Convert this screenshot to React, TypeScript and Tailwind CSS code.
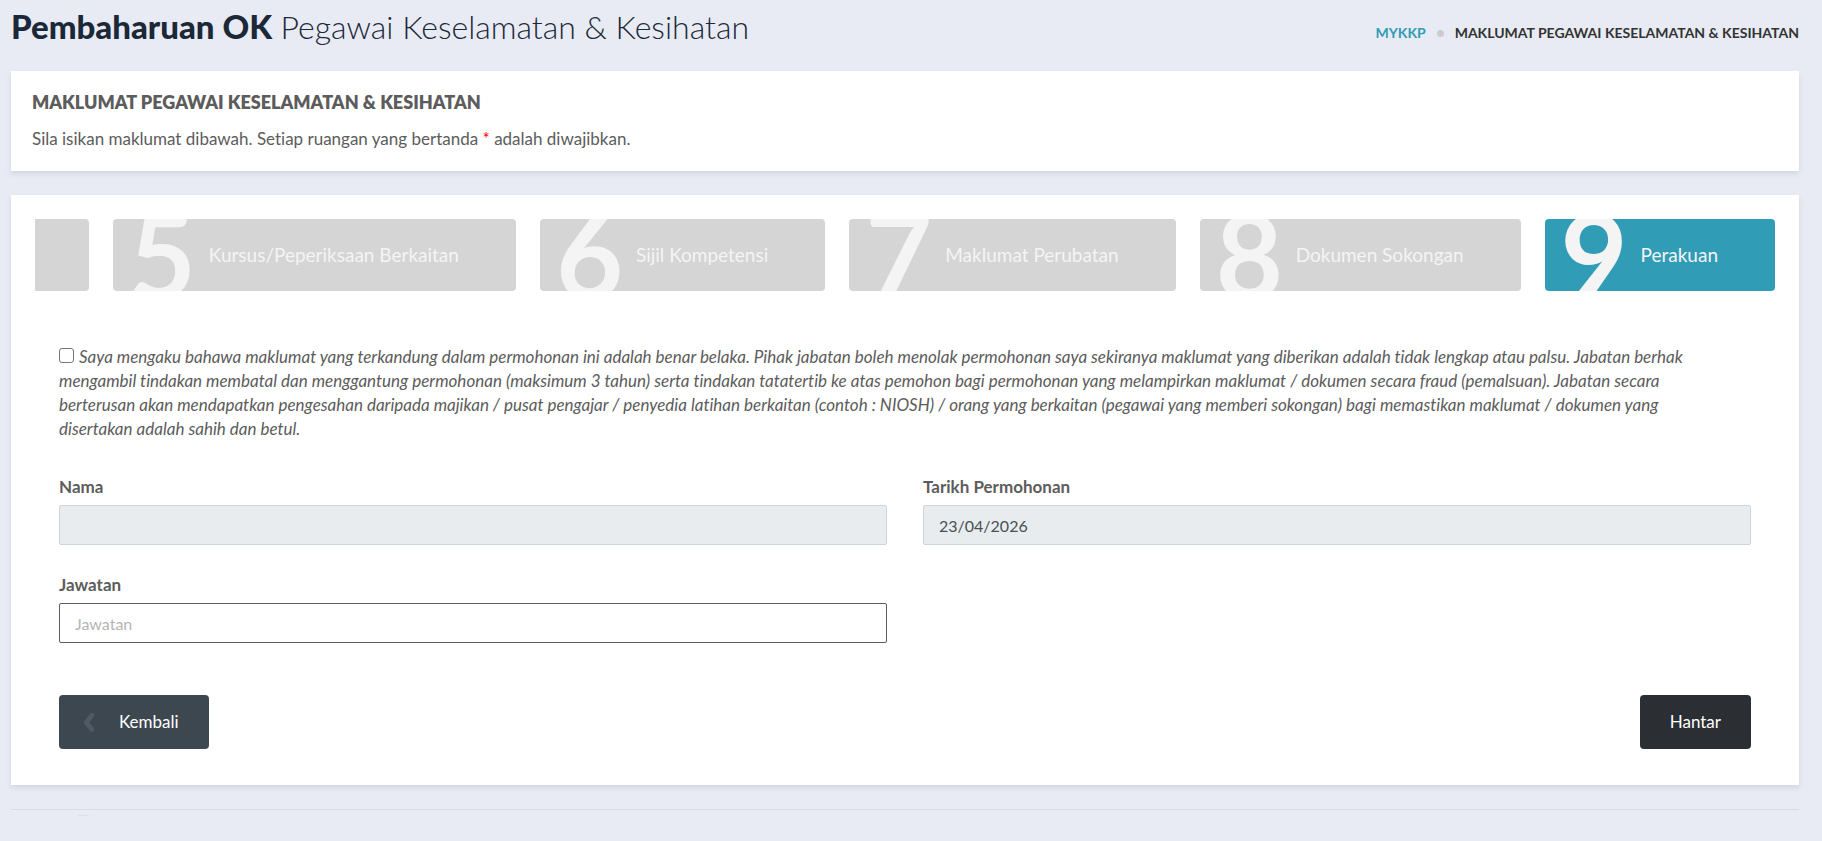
import { useId } from "react";

type Step = { number: number; label: string; active?: boolean };

const steps: Step[] = [
  { number: 5, label: "Kursus/Peperiksaan Berkaitan" },
  { number: 6, label: "Sijil Kompetensi" },
  { number: 7, label: "Maklumat Perubatan" },
  { number: 8, label: "Dokumen Sokongan" },
  { number: 9, label: "Perakuan", active: true },
];

function StepTab({ number, label, active }: Step) {
  return (
    <li
      aria-current={active ? "step" : undefined}
      className={`relative flex h-18 shrink-0 items-center overflow-hidden rounded pr-[57px] pl-24 text-[19px] whitespace-nowrap text-[#f4f4f4] ${
        active ? "bg-[#309cb5]" : "bg-[#d5d5d5]"
      }`}
    >
      <span className="absolute inset-y-0 left-4 flex items-center text-[116px] leading-none font-bold">
        {number}
      </span>
      {label}
    </li>
  );
}

type FieldProps = {
  label: string;
  defaultValue?: string;
  placeholder?: string;
  readOnly?: boolean;
};

function Field({ label, defaultValue, placeholder, readOnly }: FieldProps) {
  const id = useId();
  return (
    <div className="flex flex-col gap-1.5">
      <label htmlFor={id} className="leading-6 font-bold">
        {label}
      </label>
      <input
        id={id}
        type="text"
        defaultValue={defaultValue}
        placeholder={placeholder}
        readOnly={readOnly}
        className={`h-10 w-full rounded-xs border px-[15px] text-base outline-none placeholder:text-[#b5b5b5] ${
          readOnly
            ? "border-[#cdd4da] bg-[#e8ecee] text-[#495057]"
            : "border-[#5c5c5c] bg-white text-[#495057]"
        }`}
      />
    </div>
  );
}

export default function App() {
  return (
    <div className="min-h-screen bg-[#e8ebf4] pr-[23px] pl-[11px] font-['Lato',sans-serif] text-[17px] text-[#5c5c5c] [font-variant-ligatures:none]">
      <header className="flex h-[71px] items-start justify-between">
        <h1 className="pt-[3px] text-[33px] leading-[46px] text-[#1b2838]">
          <strong className="font-black">Pembaharuan OK</strong>{" "}
          <span className="text-[32px] font-light">Pegawai Keselamatan &amp; Kesihatan</span>
        </h1>
        <nav aria-label="Breadcrumb" className="pt-[22px]">
          <ol className="flex items-center text-sm leading-[22px] font-bold">
            <li>
              <a href="#" className="text-[#309cb5]">
                MYKKP
              </a>
            </li>
            <li aria-hidden="true" className="mx-[11px] size-[7px] rounded-full bg-[#cccccc]" />
            <li className="text-[#333333]">MAKLUMAT PEGAWAI KESELAMATAN &amp; KESIHATAN</li>
          </ol>
        </nav>
      </header>

      <main className="flex flex-col gap-6">
        <section className="h-[100px] bg-white px-[21px] pt-[19px] shadow-[0_3px_5px_rgba(60,70,100,0.12)]">
          <h2 className="text-lg leading-6 font-extrabold">MAKLUMAT PEGAWAI KESELAMATAN &amp; KESIHATAN</h2>
          <p className="mt-[13px] leading-6">
            Sila isikan maklumat dibawah. Setiap ruangan yang bertanda{" "}
            <span className="text-[#ff0000]">*</span> adalah diwajibkan.
          </p>
        </section>

        <section className="bg-white p-6 pb-9 shadow-[0_3px_5px_rgba(60,70,100,0.12)]">
          <ol className="flex gap-6 overflow-hidden">
            <li aria-hidden="true" className="h-18 min-w-0 flex-1 rounded-r bg-[#d5d5d5]" />
            {steps.map((step) => (
              <StepTab key={step.number} {...step} />
            ))}
          </ol>

          <form className="px-6 pt-[54px]" onSubmit={(event) => event.preventDefault()}>
            <label className="block pr-5 leading-6 italic">
              <input
                type="checkbox"
                className="mr-[5px] size-[15px] appearance-none rounded-[3px] border border-[#767676] bg-white"
              />
              Saya mengaku bahawa maklumat yang terkandung dalam permohonan ini adalah benar belaka. Pihak
              jabatan boleh menolak permohonan saya sekiranya maklumat yang diberikan adalah tidak lengkap
              atau palsu. Jabatan berhak mengambil tindakan membatal dan menggantung permohonan (maksimum 3
              tahun) serta tindakan tatatertib ke atas pemohon bagi permohonan yang melampirkan maklumat /
              dokumen secara fraud (pemalsuan). Jabatan secara berterusan akan mendapatkan pengesahan
              daripada majikan / pusat pengajar / penyedia latihan berkaitan (contoh : NIOSH) / orang yang
              berkaitan (pegawai yang memberi sokongan) bagi memastikan maklumat / dokumen yang disertakan
              adalah sahih dan betul.
            </label>

            <div className="mt-[34px] grid grid-cols-2 gap-x-9 gap-y-7">
              <Field label="Nama" readOnly />
              <Field label="Tarikh Permohonan" defaultValue="23/04/2026" readOnly />
              <Field label="Jawatan" placeholder="Jawatan" />
            </div>

            <div className="mt-13 flex justify-between">
              <button
                type="button"
                className="flex h-[54px] items-center gap-6 rounded bg-[#3d474f] pr-[30px] pl-6 text-white"
              >
                <svg viewBox="0 0 12 20" className="h-5 w-3" aria-hidden="true">
                  <path
                    d="M9 3.2 L3.2 10.5 L9 17.5"
                    fill="none"
                    stroke="#4e5b66"
                    strokeWidth="4.6"
                    strokeLinecap="round"
                    strokeLinejoin="round"
                  />
                </svg>
                Kembali
              </button>
              <button type="submit" className="h-[54px] rounded bg-[#2b2e33] px-[30px] text-white">
                Hantar
              </button>
            </div>
          </form>
        </section>
      </main>

      <footer className="mt-6 border-t border-[#d9dce6] pt-[5px] pl-[67px]">
        <div className="h-px w-[11px] bg-[#dcdfec]" />
      </footer>
    </div>
  );
}
